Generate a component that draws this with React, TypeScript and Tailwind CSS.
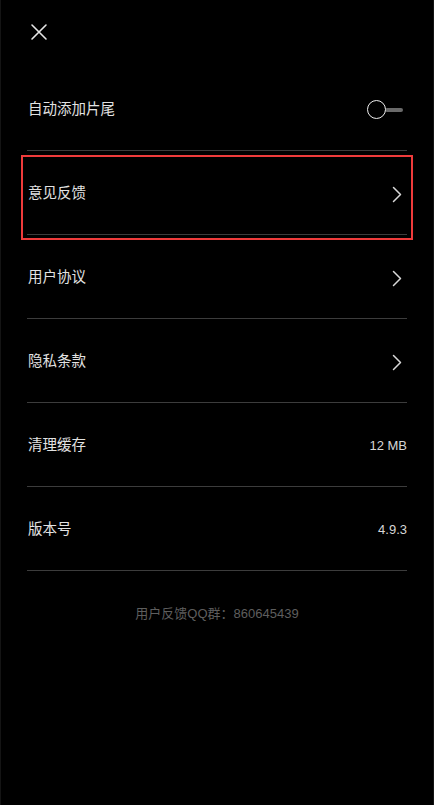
import React from "react";

const Chevron = () => (
  <svg width="10" height="17" viewBox="0 0 10 17" fill="none" className="mr-[5px]">
    <path d="M1.5 1.5 L8.5 8.5 L1.5 15.5" stroke="#d8d8d8" strokeWidth="1.5" strokeLinecap="round" strokeLinejoin="round" />
  </svg>
);

const Toggle = () => (
  <div className="relative w-[38px] h-[22px] mr-[3px]">
    <div className="absolute left-[19px] top-[9px] w-[18px] h-[4px] rounded-full bg-[#6a6a6a]" />
    <div className="absolute left-[1px] top-[1px] w-[19px] h-[19px] rounded-full border-[1.5px] border-[#eeeeee] bg-black" />
  </div>
);

type Row = { label: string; right: React.ReactNode; highlight?: boolean };

export default function App() {
  const rows: Row[] = [
    { label: "自动添加片尾", right: <Toggle /> },
    { label: "意见反馈", right: <Chevron />, highlight: true },
    { label: "用户协议", right: <Chevron /> },
    { label: "隐私条款", right: <Chevron /> },
    { label: "清理缓存", right: <span className="text-[13px] text-[#d6d6d6]">12 MB</span> },
    { label: "版本号", right: <span className="text-[13px] text-[#d6d6d6]">4.9.3</span> },
  ];
  return (
    <div
      className="w-[434px] h-[805px] bg-black border-x border-[#141414] overflow-hidden"
      style={{ fontFamily: '"Liberation Sans", "Noto Sans CJK SC", sans-serif' }}
    >
      <div className="pl-[29px] pt-[23px] h-[67px]">
        <svg width="18" height="18" viewBox="0 0 18 18" fill="none">
          <path d="M2 2 L16 16 M16 2 L2 16" stroke="#e6e6e6" strokeWidth="1.6" strokeLinecap="round" />
        </svg>
      </div>
      <div className="px-[26px]">
        {rows.map((r) => (
          <div key={r.label} className="relative h-[84px] flex flex-col">
            <div className="flex-1 flex items-center justify-between pl-[1px] pt-[3px]">
              <span className="text-[14.5px] text-[#e2e2e2]">{r.label}</span>
              {r.right}
            </div>
            <div className="h-px bg-[#3c3c3c]" />
            {r.highlight && (
              <div className="absolute left-[-6px] right-[-6px] top-[4px] bottom-[-5px] border-2 border-[#ef3b3b]" />
            )}
          </div>
        ))}
      </div>
      <div className="text-center text-[13px] text-[#5e5e5e] mt-[33px]">用户反馈QQ群：860645439</div>
    </div>
  );
}
